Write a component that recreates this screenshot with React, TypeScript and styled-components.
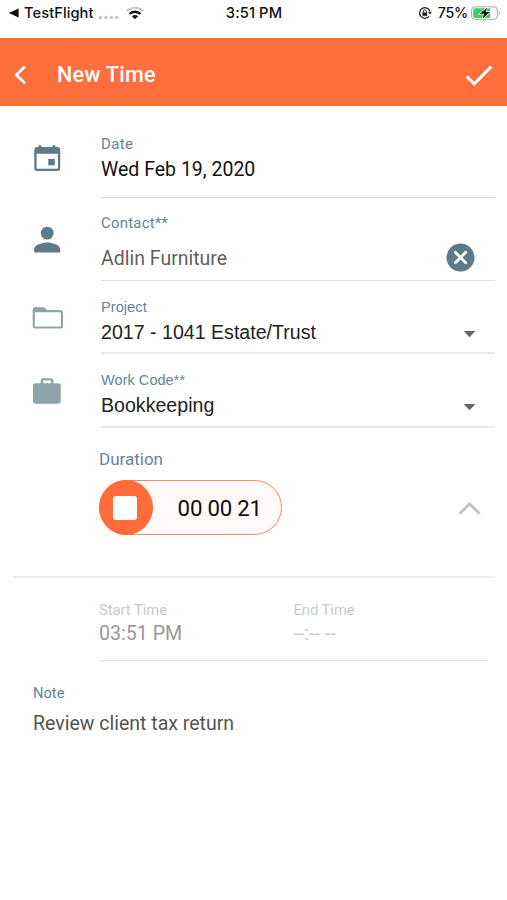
import React from "react";
import styled, { createGlobalStyle } from "styled-components";

const GlobalStyle = createGlobalStyle`
  *, *::before, *::after { box-sizing: border-box; }
  body { margin: 0; background: #fff; }
`;

const ROBOTO = `Roboto, sans-serif`;
const ARIAL = `"Liberation Sans", Arial, sans-serif`;

const Screen = styled.main`
  width: 507px;
  height: 900px;
  overflow: hidden;
  display: flex;
  flex-direction: column;
  background: #fff;
  font-family: ${ROBOTO};
  white-space: nowrap;
`;

const StatusBar = styled.div`
  flex: none;
  height: 37.6px;
  padding: 3px 6px 0 8px;
  display: grid;
  grid-template-columns: 1fr auto 1fr;
  align-items: start;
  font: 500 14.7px/20px Inter, sans-serif;
  color: #111;
`;

const StatusGroup = styled.div<{ $end?: boolean }>`
  display: flex;
  align-items: center;
  height: 20px;
  justify-content: ${(p) => (p.$end ? "flex-end" : "flex-start")};
`;

const BackApp = styled.span`
  margin: 0 4.5px 0 5px;
  letter-spacing: 0.05px;
`;

const Clock = styled.span`
  margin-right: 1px;
  letter-spacing: 0.1px;
`;

const Percent = styled.span`
  margin: 0 3px 0 6px;
  font-size: 14.2px;
  letter-spacing: -0.2px;
`;

const AppBar = styled.header`
  flex: none;
  height: 68px;
  padding: 6px 14px 0 13px;
  display: flex;
  align-items: center;
  background: #ff6f3d;
  color: #fff;
`;

const Title = styled.h1`
  flex: 1;
  margin: 0 0 0 28px;
  font: 500 21.6px/28px ${ROBOTO};
  letter-spacing: 0.25px;
`;

const IconButton = styled.button`
  padding: 0;
  border: 0;
  background: none;
  color: inherit;
  display: flex;
`;

const Row = styled.section<{ $height: number }>`
  flex: none;
  height: ${(p) => p.$height}px;
  display: grid;
  grid-template-columns: 101px 1fr;
  padding-right: 12px;
`;

const IconCell = styled.div<{ $top: number }>`
  padding: ${(p) => p.$top}px 0 0 31px;
`;

const Field = styled.div<{ $top: number; $line?: string }>`
  display: flex;
  flex-direction: column;
  padding-top: ${(p) => p.$top}px;
  border-bottom: ${(p) => p.$line ?? "1px solid #dedede"};
`;

const Label = styled.label<{ $size?: number; $gap?: number; $spacing?: number; $arial?: boolean; $pale?: boolean }>`
  height: 18px;
  margin-bottom: ${(p) => p.$gap ?? 0}px;
  font: 400 ${(p) => p.$size ?? 15}px/18px ${(p) => (p.$arial ? ARIAL : ROBOTO)};
  letter-spacing: ${(p) => p.$spacing ?? 0}px;
  color: ${(p) => (p.$pale ? "#c6cacd" : "#668594")};
`;

const ValueLine = styled.div`
  display: flex;
  align-items: center;
  justify-content: space-between;
  height: 24px;
`;

const Value = styled.span<{ $color?: string; $size?: number; $spacing?: number; $arial?: boolean }>`
  font: 400 ${(p) => p.$size ?? 19.5}px/24px ${(p) => (p.$arial ? ARIAL : ROBOTO)};
  letter-spacing: ${(p) => p.$spacing ?? 0}px;
  color: ${(p) => p.$color ?? "#111"};
`;

const ClearButton = styled(IconButton)`
  margin: -2px 19.6px 0 0;
`;

const Caret = styled.svg`
  margin: 4px 19.5px 0 0;
`;

const DurationSection = styled.section`
  flex: none;
  height: 150.4px;
  margin: 0 12px 0 13px;
  padding: 22.7px 0 0 86px;
  display: flex;
  flex-direction: column;
  border-bottom: 2px solid #ececec;
`;

const TimerLine = styled.div`
  display: flex;
  align-items: center;
  justify-content: space-between;
  padding-right: 14px;
`;

const Timer = styled.div`
  width: 183.5px;
  height: 55px;
  margin-left: -0.4px;
  border: 1.5px solid #fb8a63;
  border-radius: 28px;
  background: #fffaf9;
  display: flex;
  align-items: center;
`;

const StopButton = styled.button`
  flex: none;
  width: 54px;
  height: 55px;
  margin: 0 0 0 -1px;
  padding: 0 1px 0 0;
  border: 0;
  border-radius: 50%;
  background: #ff6c39;
  display: grid;
  place-items: center;
`;

const StopMark = styled.span`
  width: 24px;
  height: 24px;
  border-radius: 3px;
  background: #fff;
`;

const Elapsed = styled.span`
  margin-left: 25px;
  font: 400 22.2px/28px ${ROBOTO};
  letter-spacing: -0.2px;
  color: #0c0c0c;
`;

const Times = styled.section`
  flex: none;
  height: 82.6px;
  margin: 0 19px 0 99px;
  padding-top: 23px;
  display: grid;
  grid-template-columns: 194.5px 1fr;
  border-bottom: 1px solid #dedede;
`;

const TimeField = styled.div`
  display: flex;
  flex-direction: column;
`;

const Note = styled.section`
  padding: 23px 0 0 33px;
  display: flex;
  flex-direction: column;
`;

const SLATE = "#5b7b89";
const SLATE_SOFT = "#8fa3ab";

const CalendarIcon = () => (
  <svg width="32" height="30" viewBox="0 0 32 30" display="block">
    <path fill={SLATE} fillRule="evenodd" d="M7.4 1.2h3v1.9h11V1.2h3v1.9h2.1a2.7 2.7 0 0 1 2.7 2.7v18.5a2.7 2.7 0 0 1-2.7 2.7H6a2.7 2.7 0 0 1-2.7-2.7V5.8A2.7 2.7 0 0 1 6 3.1h1.4zM5.6 9.7v14.1c0 .5.4.9.9.9h19.6c.5 0 .9-.4.9-.9V9.7z" />
    <path fill={SLATE} d="M17.3 15h6.5v6.3h-6.5z" />
  </svg>
);

const PersonIcon = () => (
  <svg width="32" height="30" viewBox="0 0 32 30" display="block">
    <circle cx="16.2" cy="8.1" r="6.4" fill={SLATE} />
    <path fill={SLATE} d="M3.1 27.4v-3.2c0-4.3 8.7-6.6 13.1-6.6s13 2.3 13 6.6v3.2z" />
  </svg>
);

const FolderIcon = () => (
  <svg width="34" height="26" viewBox="0 0 34 26" display="block">
    <path fill={SLATE_SOFT} fillRule="evenodd" d="M4.2 2.2h8.2c.7 0 1.2.3 1.6.8l2 2.1h13.3a2.7 2.7 0 0 1 2.7 2.7v13.1a2.7 2.7 0 0 1-2.7 2.7H4.4a2.7 2.7 0 0 1-2.7-2.7V4.7a2.5 2.5 0 0 1 2.5-2.5zM3.8 8.1v12.6c0 .5.4.9.9.9H29c.5 0 .9-.4.9-.9V8.1c0-.5-.4-.9-.9-.9H4.7c-.5 0-.9.4-.9.9z" />
  </svg>
);

const BriefcaseIcon = () => (
  <svg width="32" height="30" viewBox="0 0 32 30" display="block">
    <path fill={SLATE_SOFT} fillRule="evenodd" d="M12 1.2h8.1a2.3 2.3 0 0 1 2.3 2.3v2.7H27a2.8 2.8 0 0 1 2.8 2.8v15a2.8 2.8 0 0 1-2.8 2.8H4.8A2.8 2.8 0 0 1 2 24V9a2.8 2.8 0 0 1 2.8-2.8h4.9V3.5A2.3 2.3 0 0 1 12 1.2zm.2 2.2v2.8h7.7V3.4z" />
  </svg>
);

const WifiIcon = () => (
  <svg width="18" height="14" viewBox="0 0 18 14">
    <path d="M.6 5.1a12 12 0 0 1 16.8 0" fill="none" stroke="#c4c4c4" strokeWidth="2" />
    <path d="M3.5 7.9a8 8 0 0 1 11 0" fill="none" stroke="#111" strokeWidth="2.4" />
    <path d="M9 13.2 5.9 10.3a4.6 4.6 0 0 1 6.2 0z" fill="#111" />
  </svg>
);

const SignalDots = styled.svg`
  margin: 8px 6px 0 0;
`;

const RotationLockIcon = () => (
  <svg width="14" height="14" viewBox="0 0 14 14">
    <path d="M11.9 5.2A5.3 5.3 0 1 0 11 10.4" fill="none" stroke="#222" strokeWidth="1.3" />
    <path d="M9.9 5.8h3.9L12.1 8.6z" fill="#222" />
    <path d="M4.3 6.4h4.9v3.4H4.3z" fill="#222" />
    <path d="M5.3 6.5V5.3a1.45 1.45 0 0 1 2.9 0v1.2" fill="none" stroke="#222" strokeWidth="1" />
  </svg>
);

const BatteryIcon = () => (
  <svg width="30" height="14" viewBox="0 0 30 14">
    <rect x=".6" y=".8" width="25.8" height="12.6" rx="3.4" fill="#fff" stroke="#a9a9a9" strokeWidth="1" />
    <path d="M4.2 2.3h15v9.6h-15a2 2 0 0 1-2-2V4.3a2 2 0 0 1 2-2z" fill="#3fd065" />
    <path d="M27.8 5v4.2c1.6-.6 1.6-3.6 0-4.2z" fill="#a9a9a9" />
    <path d="M16.2 1.4 8.7 7.8h4.4l-1.5 5 7.2-6.7h-4.3z" fill="#111" stroke="#fff" strokeWidth="1.2" paintOrder="stroke" />
  </svg>
);

const CaretIcon = () => (
  <Caret width="13" height="8" viewBox="0 0 13 8">
    <path d="M.6 1h11.8L6.5 7.2z" fill="#666" />
  </Caret>
);

export default function App() {
  return (
    <Screen>
      <GlobalStyle />
      <StatusBar>
        <StatusGroup>
          <svg width="11" height="10" viewBox="0 0 11 10">
            <path d="M.8 5 10.6.6v8.8z" fill="#111" />
          </svg>
          <BackApp>TestFlight</BackApp>
          <SignalDots width="22" height="5" viewBox="0 0 22 5">
            {[2.4, 7.9, 13.4, 18.9].map((x) => (
              <circle key={x} cx={x} cy="2.5" r="1.8" fill="#c8c8c8" />
            ))}
          </SignalDots>
          <WifiIcon />
        </StatusGroup>
        <Clock>3:51 PM</Clock>
        <StatusGroup $end>
          <RotationLockIcon />
          <Percent>75%</Percent>
          <BatteryIcon />
        </StatusGroup>
      </StatusBar>

      <AppBar>
        <IconButton aria-label="Back">
          <svg width="16" height="22" viewBox="0 0 16 22">
            <path d="M12 2.6 3.2 10.9l8.8 8.3" fill="none" stroke="#fff" strokeWidth="2.7" />
          </svg>
        </IconButton>
        <Title>New Time</Title>
        <IconButton aria-label="Save">
          <svg width="28" height="24" viewBox="0 0 28 24">
            <path d="M1.5 13.3 9.2 20.8 26.3 3.6" fill="none" stroke="#fff" strokeWidth="3" />
          </svg>
        </IconButton>
      </AppBar>

      <Row $height={92.2}>
        <IconCell $top={38}><CalendarIcon /></IconCell>
        <Field $top={29.4}>
          <Label $gap={5} $spacing={0.4}>Date</Label>
          <ValueLine><Value>Wed Feb 19, 2020</Value></ValueLine>
        </Field>
      </Row>

      <Row $height={83}>
        <IconCell $top={27}><PersonIcon /></IconCell>
        <Field $top={16.6}>
          <Label $gap={14.4} $spacing={0.2}>Contact**</Label>
          <ValueLine>
            <Value $color="#5f5f5f">Adlin Furniture</Value>
            <ClearButton aria-label="Clear contact">
              <svg width="29" height="29" viewBox="0 0 29 29">
                <circle cx="14.5" cy="14.5" r="14" fill={SLATE} />
                <path d="m9.3 9.3 10.4 10.4M19.7 9.3 9.3 19.7" stroke="#fff" strokeWidth="2.8" strokeLinecap="round" />
              </svg>
            </ClearButton>
          </ValueLine>
        </Field>
      </Row>

      <Row $height={73.5}>
        <IconCell $top={24}><FolderIcon /></IconCell>
        <Field $top={17} $line="2px solid #e9e9e9">
          <Label $gap={4} $size={14.7} $arial>Project</Label>
          <ValueLine>
            <Value $arial $color="#222" $size={19.6}>2017 - 1041 Estate/Trust</Value>
            <CaretIcon />
          </ValueLine>
        </Field>
      </Row>

      <Row $height={73.3}>
        <IconCell $top={22.5}><BriefcaseIcon /></IconCell>
        <Field $top={17} $line="2px solid #e9e9e9">
          <Label $gap={4} $size={14.6} $arial>Work Code**</Label>
          <ValueLine>
            <Value $arial $color="#222" $size={19.6}>Bookkeeping</Value>
            <CaretIcon />
          </ValueLine>
        </Field>
      </Row>

      <DurationSection>
        <Label $size={17} $gap={11.8}>Duration</Label>
        <TimerLine>
          <Timer>
            <StopButton aria-label="Stop timer"><StopMark /></StopButton>
            <Elapsed>00 00 21</Elapsed>
          </Timer>
          <IconButton aria-label="Collapse">
            <svg width="23" height="16" viewBox="0 0 23 16">
              <path d="M1.6 13.8 11.6 3.8l10 10" fill="none" stroke="#c0c6c8" strokeWidth="3" />
            </svg>
          </IconButton>
        </TimerLine>
      </DurationSection>

      <Times>
        <TimeField>
          <Label $pale $gap={3} $size={14.7}>Start Time</Label>
          <Value $color="#999" $size={19.6}>03:51 PM</Value>
        </TimeField>
        <TimeField>
          <Label $pale $gap={3} $size={14.7}>End Time</Label>
          <Value $color="#c9c9c9" $size={19.6}>--:-- --</Value>
        </TimeField>
      </Times>

      <Note>
        <Label $gap={10} $size={14.7}>Note</Label>
        <Value $color="#555">Review client tax return</Value>
      </Note>
    </Screen>
  );
}
